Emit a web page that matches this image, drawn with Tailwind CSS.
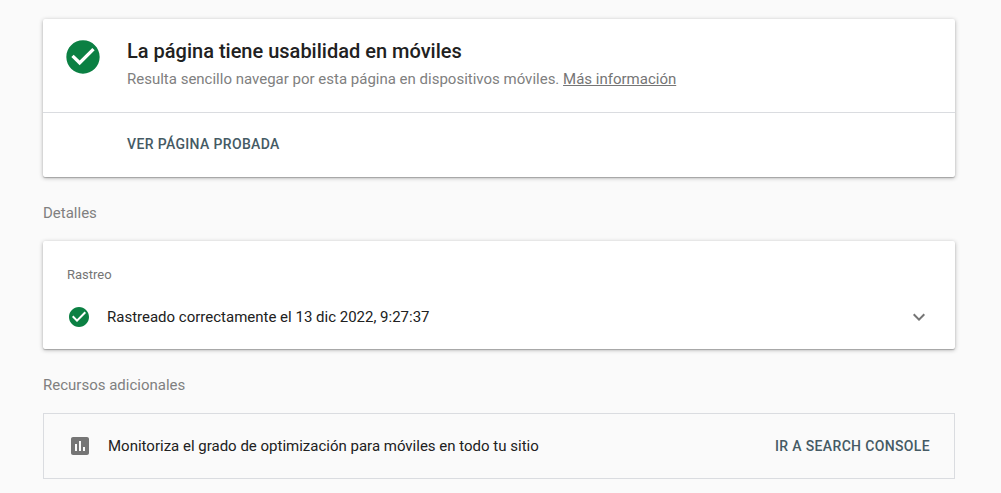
<!DOCTYPE html>
<html lang="es">
<head>
    <meta charset="UTF-8">
    <meta name="viewport" content="width=device-width, initial-scale=1.0">
    <title>Prueba de optimización para móviles</title>
    <script src="https://cdn.jsdelivr.net/npm/@tailwindcss/browser@4"></script>
</head>

<body class="min-h-screen bg-[#fafafa] font-['Roboto',sans-serif] text-[15px] leading-6 text-[#212121]">
    <main class="pt-[19px] pr-[46px] pb-3 pl-[43px]">
        <!-- Result -->
        <section class="rounded-xs bg-white shadow-[0_1px_4px_rgba(0,0,0,0.3),0_1px_1px_rgba(0,0,0,0.2)]">
            <div class="flex gap-6 border-b border-[#dadce0] px-5 pt-[18px] pb-[21px]">
                <svg class="size-10 shrink-0" viewBox="0 0 24 24" fill="#0b8043" aria-hidden="true">
                    <path d="M12 2C6.48 2 2 6.48 2 12s4.48 10 10 10 10-4.48 10-10S17.52 2 12 2zm-2 15l-5-5 1.41-1.41L10 14.17l7.59-7.59L19 8l-9 9z"/>
                </svg>
                <div>
                    <h1 class="text-xl leading-7 font-medium">La página tiene usabilidad en móviles</h1>
                    <p class="pt-0.5 text-[#808080]">Resulta sencillo navegar por esta página en dispositivos móviles. <a href="#" class="text-[#757575] underline">Más información</a></p>
                </div>
            </div>
            <div class="pt-[19px] pb-[21px] pl-[84px]">
                <button type="button" class="text-sm leading-6 font-medium tracking-wide text-[#455a64] uppercase">Ver página probada</button>
            </div>
        </section>

        <!-- Details -->
        <h2 class="pt-6 pb-4 text-[#808080]">Detalles</h2>
        <section class="rounded-xs bg-white px-6 py-5 shadow-[0_1px_4px_rgba(0,0,0,0.3),0_1px_1px_rgba(0,0,0,0.2)]">
            <h3 class="text-[13px] leading-7 text-[#757575]">Rastreo</h3>
            <div class="flex items-center gap-4 pt-4">
                <svg class="size-6 shrink-0" viewBox="0 0 24 24" fill="#0b8043" aria-hidden="true">
                    <path d="M12 2C6.48 2 2 6.48 2 12s4.48 10 10 10 10-4.48 10-10S17.52 2 12 2zm-2 15l-5-5 1.41-1.41L10 14.17l7.59-7.59L19 8l-9 9z"/>
                </svg>
                <p class="grow">Rastreado correctamente el 13 dic 2022, 9:27:37</p>
                <button type="button" aria-label="Mostrar detalles">
                    <svg class="size-6" viewBox="0 0 24 24" fill="#757575" aria-hidden="true">
                        <path d="M7.41 8.59L12 13.17l4.59-4.58L18 10l-6 6-6-6z"/>
                    </svg>
                </button>
            </div>
        </section>

        <!-- Extra resources -->
        <h2 class="pt-6 pb-4 text-[#808080]">Recursos adicionales</h2>
        <section class="flex items-center gap-4 border border-[#dadce0] px-6 py-5">
            <svg class="size-6 shrink-0" viewBox="0 0 24 24" fill="#757575" aria-hidden="true">
                <path d="M19 3H5c-1.1 0-2 .9-2 2v14c0 1.1.9 2 2 2h14c1.1 0 2-.9 2-2V5c0-1.1-.9-2-2-2zM9 17H7v-7h2v7zm4 0h-2V7h2v10zm4 0h-2v-4h2v4z"/>
            </svg>
            <p class="grow">Monitoriza el grado de optimización para móviles en todo tu sitio</p>
            <a href="#" class="text-sm leading-6 font-medium tracking-wide text-[#455a64] uppercase">Ir a Search Console</a>
        </section>
    </main>
</body>
</html>
